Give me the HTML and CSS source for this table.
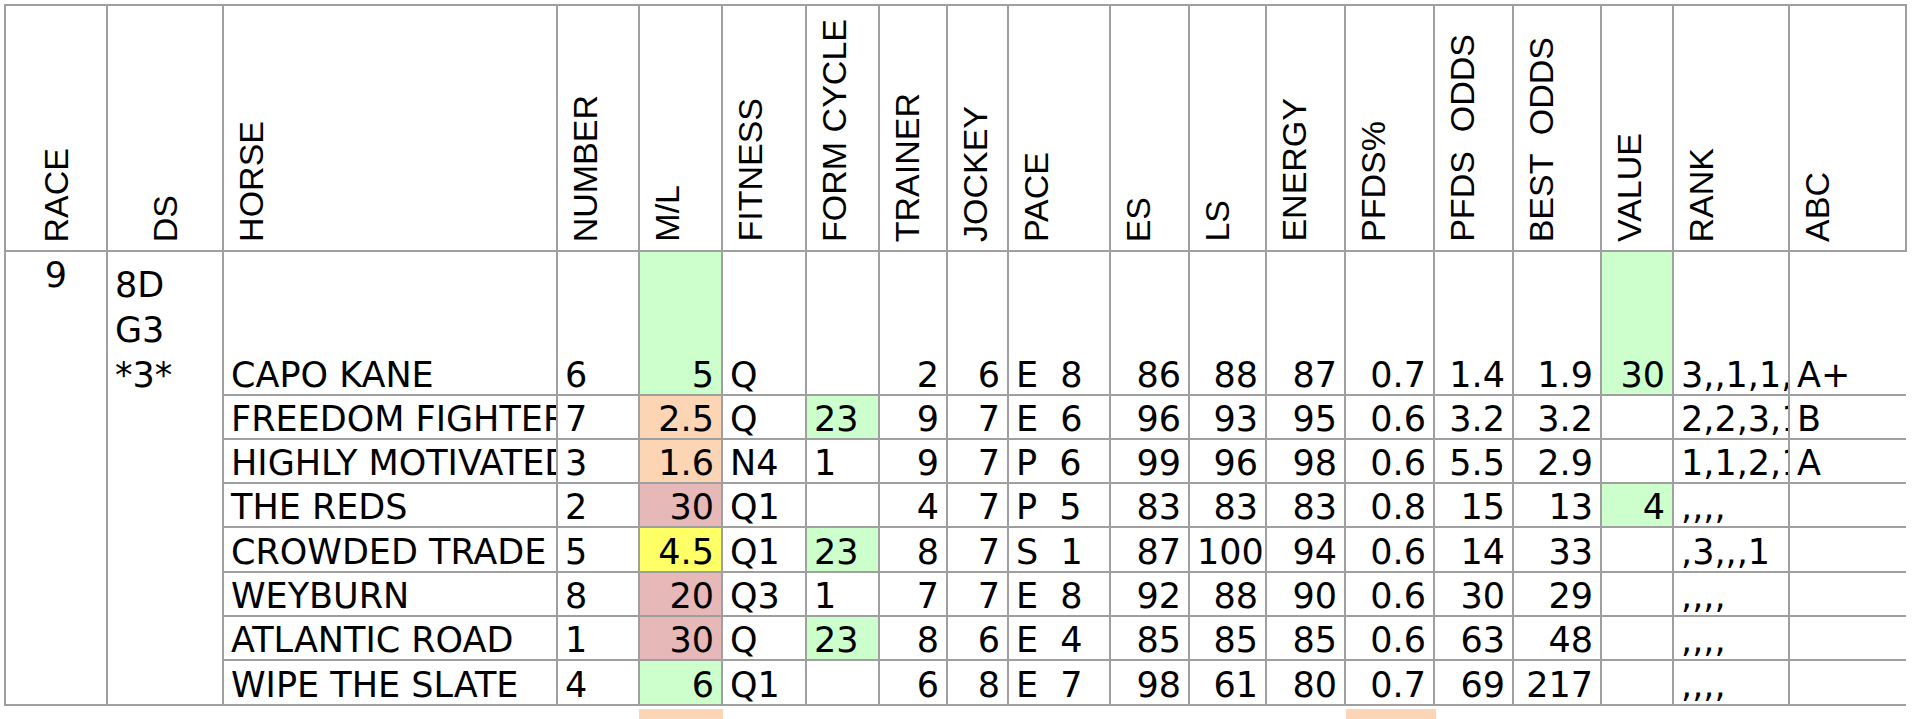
FILE: index.html
```html
<!DOCTYPE html>
<html lang="en">
<head>
<meta charset="utf-8">
<title>Race 9</title>
<link rel="stylesheet" href="styles.css">
</head>
<body>
<table class="sheet">
  <colgroup>
    <col class="w-race"><col class="w-ds"><col class="w-horse"><col class="w-num"><col class="w-ml">
    <col class="w-fit"><col class="w-form"><col class="w-trn"><col class="w-jky"><col class="w-pace">
    <col class="w-es"><col class="w-ls"><col class="w-en"><col class="w-pct"><col class="w-podds">
    <col class="w-bodds"><col class="w-val"><col class="w-rank"><col class="w-abc">
  </colgroup>
  <thead>
    <tr class="hdr">
      <th class="ctr"><span class="rot">RACE</span></th>
      <th class="ctr"><span class="rot">DS</span></th>
      <th><span class="rot">HORSE</span></th>
      <th><span class="rot">NUMBER</span></th>
      <th><span class="rot">M/L</span></th>
      <th><span class="rot">FITNESS</span></th>
      <th><span class="rot">FORM CYCLE</span></th>
      <th><span class="rot">TRAINER</span></th>
      <th><span class="rot">JOCKEY</span></th>
      <th><span class="rot">PACE</span></th>
      <th><span class="rot">ES</span></th>
      <th><span class="rot">LS</span></th>
      <th><span class="rot">ENERGY</span></th>
      <th><span class="rot">PFDS%</span></th>
      <th><span class="rot wide">PFDS  ODDS</span></th>
      <th><span class="rot wide">BEST  ODDS</span></th>
      <th><span class="rot">VALUE</span></th>
      <th><span class="rot">RANK</span></th>
      <th><span class="rot">ABC</span></th>
    </tr>
  </thead>
  <tbody>
    <tr class="r1">
      <td class="race" rowspan="8">9</td>
      <td class="ds" rowspan="8">8D<br>G3<br>*3*</td>
      <td>CAPO KANE</td><td>6</td><td class="n green">5</td><td>Q</td><td></td>
      <td class="n">2</td><td class="n">6</td><td class="pace">E  8</td>
      <td class="n">86</td><td class="n">88</td><td class="n">87</td><td class="n">0.7</td>
      <td class="n">1.4</td><td class="n">1.9</td><td class="n green">30</td><td>3,,1,1,1</td><td class="abc">A+</td>
    </tr>
    <tr>
      <td>FREEDOM FIGHTER</td><td>7</td><td class="n peach">2.5</td><td>Q</td><td class="green">23</td>
      <td class="n">9</td><td class="n">7</td><td class="pace">E  6</td>
      <td class="n">96</td><td class="n">93</td><td class="n">95</td><td class="n">0.6</td>
      <td class="n">3.2</td><td class="n">3.2</td><td></td><td>2,2,3,1,1</td><td class="abc">B</td>
    </tr>
    <tr>
      <td>HIGHLY MOTIVATED</td><td>3</td><td class="n peach">1.6</td><td>N4</td><td>1</td>
      <td class="n">9</td><td class="n">7</td><td class="pace">P  6</td>
      <td class="n">99</td><td class="n">96</td><td class="n">98</td><td class="n">0.6</td>
      <td class="n">5.5</td><td class="n">2.9</td><td></td><td>1,1,2,1,1</td><td class="abc">A</td>
    </tr>
    <tr>
      <td>THE REDS</td><td>2</td><td class="n pink">30</td><td>Q1</td><td></td>
      <td class="n">4</td><td class="n">7</td><td class="pace">P  5</td>
      <td class="n">83</td><td class="n">83</td><td class="n">83</td><td class="n">0.8</td>
      <td class="n">15</td><td class="n">13</td><td class="n green">4</td><td>,,,,</td><td class="abc"></td>
    </tr>
    <tr>
      <td>CROWDED TRADE</td><td>5</td><td class="n yellow">4.5</td><td>Q1</td><td class="green">23</td>
      <td class="n">8</td><td class="n">7</td><td class="pace">S  1</td>
      <td class="n">87</td><td class="n">100</td><td class="n">94</td><td class="n">0.6</td>
      <td class="n">14</td><td class="n">33</td><td></td><td>,3,,,1</td><td class="abc"></td>
    </tr>
    <tr>
      <td>WEYBURN</td><td>8</td><td class="n pink">20</td><td>Q3</td><td>1</td>
      <td class="n">7</td><td class="n">7</td><td class="pace">E  8</td>
      <td class="n">92</td><td class="n">88</td><td class="n">90</td><td class="n">0.6</td>
      <td class="n">30</td><td class="n">29</td><td></td><td>,,,,</td><td class="abc"></td>
    </tr>
    <tr>
      <td>ATLANTIC ROAD</td><td>1</td><td class="n pink">30</td><td>Q</td><td class="green">23</td>
      <td class="n">8</td><td class="n">6</td><td class="pace">E  4</td>
      <td class="n">85</td><td class="n">85</td><td class="n">85</td><td class="n">0.6</td>
      <td class="n">63</td><td class="n">48</td><td></td><td>,,,,</td><td class="abc"></td>
    </tr>
    <tr>
      <td>WIPE THE SLATE</td><td>4</td><td class="n green">6</td><td>Q1</td><td></td>
      <td class="n">6</td><td class="n">8</td><td class="pace">E  7</td>
      <td class="n">98</td><td class="n">61</td><td class="n">80</td><td class="n">0.7</td>
      <td class="n">69</td><td class="n">217</td><td></td><td>,,,,</td><td class="abc"></td>
    </tr>
  </tbody>
</table>
<div class="next">
  <div></div><div></div><div></div><div></div><div class="peach"></div>
  <div></div><div></div><div></div><div></div><div></div>
  <div></div><div></div><div></div><div class="peach"></div><div></div>
  <div></div><div></div><div></div><div></div>
</div>
</body>
</html>
```

FILE: styles.css
```css
html, body {
  background: #ffffff;
}
body {
  margin: 4px;
}

.sheet {
  border-collapse: collapse;
  table-layout: fixed;
  width: 1903px;
  font-family: "DejaVu Sans", Verdana, sans-serif;
  font-size: 35px;
  color: #000000;
}

.w-race { width: 102px; }
.w-ds { width: 116px; }
.w-horse { width: 334px; }
.w-num { width: 82px; }
.w-ml { width: 83px; }
.w-fit { width: 84px; }
.w-form { width: 73px; }
.w-trn { width: 68px; }
.w-jky { width: 61px; }
.w-pace { width: 102px; }
.w-es { width: 79px; }
.w-ls { width: 77px; }
.w-en { width: 79px; }
.w-pct { width: 89px; }
.w-podds { width: 79px; }
.w-bodds { width: 88px; }
.w-val { width: 72px; }
.w-rank { width: 116px; }
.w-abc { width: 117px; }

.sheet th,
.sheet td {
  border: 2px solid #9f9f9f;
  overflow: hidden;
  white-space: nowrap;
}

.sheet th {
  height: 236px;
  vertical-align: bottom;
  text-align: left;
  padding: 0 0 8px 8px;
  font-family: "Liberation Sans", Arial, sans-serif;
  font-size: 34px;
  font-weight: normal;
  line-height: 0;
}
.sheet th.ctr {
  text-align: center;
  padding-left: 0;
}

.rot {
  display: inline-block;
  writing-mode: vertical-rl;
  transform: rotate(180deg);
  line-height: normal;
  vertical-align: bottom;
}
.rot.wide {
  white-space: pre;
}

.sheet td {
  height: 42.3px;
  padding: 0 7px;
  vertical-align: bottom;
  text-align: left;
  line-height: 37px;
}
.sheet tr.r1 td {
  height: 141.5px;
}

.sheet td.n { text-align: right; }
.sheet td.pace { white-space: pre; }
.sheet td.abc { border-right: none; }

.sheet td.race {
  vertical-align: top;
  text-align: center;
  line-height: 45px;
  padding-top: 1px;
}
.sheet td.ds {
  vertical-align: top;
  line-height: 45px;
  padding-top: 11px;
}

.green { background: #ccffcc; }
.peach { background: #fcd5b4; }
.pink { background: #e6b8b7; }
.yellow { background: #ffff66; }

.next {
  display: grid;
  grid-template-columns: 103px 116px 334px 82px 84px 84px 73px 68px 61px 102px 79px 77px 79px 90px 79px 88px 72px 116px 117px;
  height: 24px;
  margin-top: 3px;
}
```
